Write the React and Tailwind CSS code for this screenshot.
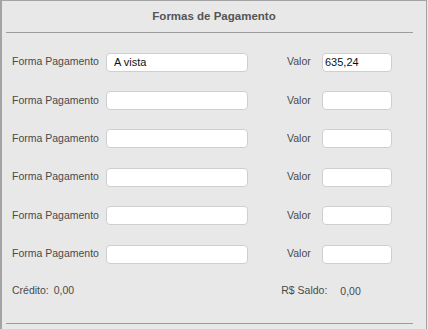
import React from 'react';

const rows = [
    { forma: 'A vista', valor: '635,24' },
    { forma: '', valor: '' },
    { forma: '', valor: '' },
    { forma: '', valor: '' },
    { forma: '', valor: '' },
    { forma: '', valor: '' },
];

const font = { fontFamily: '"Liberation Sans", Arial, sans-serif' };

export default function App() {
    return (
        <div className="w-[428px] h-[329px] bg-[#e9e9e9] overflow-hidden" style={font}>
            <div className="w-[427px] h-[329px] border-l-2 border-t border-r border-[#a3a3a3] bg-[#e8e8e8] flex flex-col">
                <div className="h-[31px] flex items-center justify-center text-[11.5px] font-bold text-[#555555]">
                    Formas de Pagamento
                </div>
                <div className="ml-[4px] w-[407px] h-px bg-[#9c9c9c]" />

                <div className="mt-[10px] flex flex-col">
                    {rows.map((r, i) => (
                        <div key={i} className="h-[38.4px] flex items-center text-[10.5px] text-[#4a4a4a]">
                            <span className="ml-[10px] w-[94px]">Forma Pagamento</span>
                            <input
                                readOnly
                                value={r.forma}
                                className="w-[142px] h-[19px] rounded-[4px] border border-[#cfcfcf] bg-white pl-[7px] text-[11px] text-[#111] outline-none"
                                style={font}
                            />
                            <span className="ml-[39px] w-[35px]">Valor</span>
                            <input
                                readOnly
                                value={r.valor}
                                className="w-[70px] h-[19px] rounded-[4px] border border-[#cfcfcf] bg-white pl-[2px] text-[11px] text-[#111] outline-none"
                                style={font}
                            />
                        </div>
                    ))}
                    <div className="h-[36px] flex items-center text-[10.5px] text-[#4a4a4a]">
                        <span className="ml-[10px]">Crédito:</span>
                        <span className="ml-[5px]">0,00</span>
                        <span className="ml-[207px]">R$ Saldo:</span>
                        <span className="ml-[13px] mt-[2px]">0,00</span>
                    </div>
                </div>

                <div className="mt-[14px] ml-[4px] w-[407px] h-px bg-[#9c9c9c]" />
            </div>
        </div>
    );
}
